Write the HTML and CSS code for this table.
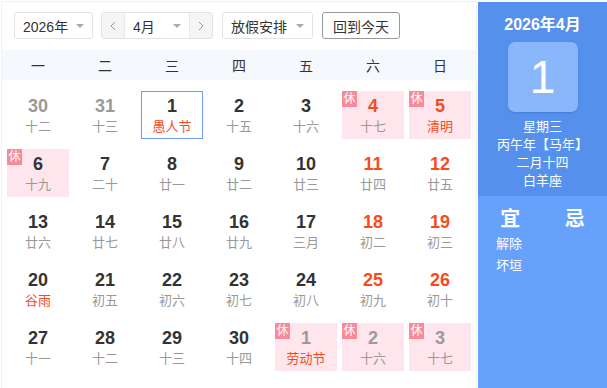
FILE: index.html
```html
<!DOCTYPE html>
<html lang="zh-CN">
<head>
<meta charset="utf-8">
<title>万年历</title>
<link rel="stylesheet" href="styles.css">
</head>
<body>
<div class="cal">
  <div class="main">
    <div class="toolbar">
      <div class="select sel-year"><span>2026年</span><i class="caret"></i></div>
      <div class="month-group">
        <div class="nav"><svg width="6" height="10" viewBox="0 0 6 10"><polyline points="5,1 1,5 5,9" fill="none" stroke="#999" stroke-width="1"/></svg></div>
        <div class="select sel-month"><span>4月</span><i class="caret"></i></div>
        <div class="nav"><svg width="6" height="10" viewBox="0 0 6 10"><polyline points="1,1 5,5 1,9" fill="none" stroke="#999" stroke-width="1"/></svg></div>
      </div>
      <div class="select sel-holiday"><span>放假安排</span><i class="caret"></i></div>
      <button class="today-btn">回到今天</button>
    </div>
    <div class="week">
      <span>一</span><span>二</span><span>三</span><span>四</span><span>五</span><span>六</span><span>日</span>
    </div>
    <div class="grid">
      <div class="cell other"><b>30</b><em>十二</em></div>
      <div class="cell other"><b>31</b><em>十三</em></div>
      <div class="cell today"><b>1</b><em class="fest">愚人节</em></div>
      <div class="cell"><b>2</b><em>十五</em></div>
      <div class="cell"><b>3</b><em>十六</em></div>
      <div class="cell rest wk"><i class="badge">休</i><b>4</b><em>十七</em></div>
      <div class="cell rest wk"><i class="badge">休</i><b>5</b><em class="fest">清明</em></div>

      <div class="cell rest"><i class="badge">休</i><b>6</b><em>十九</em></div>
      <div class="cell"><b>7</b><em>二十</em></div>
      <div class="cell"><b>8</b><em>廿一</em></div>
      <div class="cell"><b>9</b><em>廿二</em></div>
      <div class="cell"><b>10</b><em>廿三</em></div>
      <div class="cell wk"><b>11</b><em>廿四</em></div>
      <div class="cell wk"><b>12</b><em>廿五</em></div>

      <div class="cell"><b>13</b><em>廿六</em></div>
      <div class="cell"><b>14</b><em>廿七</em></div>
      <div class="cell"><b>15</b><em>廿八</em></div>
      <div class="cell"><b>16</b><em>廿九</em></div>
      <div class="cell"><b>17</b><em>三月</em></div>
      <div class="cell wk"><b>18</b><em>初二</em></div>
      <div class="cell wk"><b>19</b><em>初三</em></div>

      <div class="cell"><b>20</b><em class="fest">谷雨</em></div>
      <div class="cell"><b>21</b><em>初五</em></div>
      <div class="cell"><b>22</b><em>初六</em></div>
      <div class="cell"><b>23</b><em>初七</em></div>
      <div class="cell"><b>24</b><em>初八</em></div>
      <div class="cell wk"><b>25</b><em>初九</em></div>
      <div class="cell wk"><b>26</b><em>初十</em></div>

      <div class="cell"><b>27</b><em>十一</em></div>
      <div class="cell"><b>28</b><em>十二</em></div>
      <div class="cell"><b>29</b><em>十三</em></div>
      <div class="cell"><b>30</b><em>十四</em></div>
      <div class="cell other rest"><i class="badge">休</i><b>1</b><em class="fest">劳动节</em></div>
      <div class="cell other rest"><i class="badge">休</i><b>2</b><em>十六</em></div>
      <div class="cell other rest"><i class="badge">休</i><b>3</b><em>十七</em></div>
    </div>
  </div>
  <div class="side">
    <div class="side-top">
      <div class="side-title">2026年4月</div>
      <div class="day-box">1</div>
      <div class="info">
        <div>星期三</div>
        <div>丙午年【马年】</div>
        <div>二月十四</div>
        <div>白羊座</div>
      </div>
    </div>
    <div class="side-bottom">
      <div class="col">
        <div class="col-head">宜</div>
        <div class="item">解除</div>
        <div class="item">坏垣</div>
      </div>
      <div class="col">
        <div class="col-head">忌</div>
      </div>
    </div>
  </div>
</div>
</body>
</html>
```

FILE: styles.css
```css
* { box-sizing: border-box; }
html, body { margin: 0; padding: 0; background: #fff; }
body {
  font-family: "Liberation Sans", "Noto Sans CJK SC", sans-serif;
  color: #333;
  width: 607px;
  height: 388px;
  overflow: hidden;
}
.cal {
  display: flex;
  padding: 1px 0 0 1px;
  height: 388px;
}
.main {
  width: 476px;
  margin-right: 1px;
  border: 1px solid #f2f2f2;
  border-bottom: none;
}
.toolbar {
  display: flex;
  align-items: center;
  padding: 10px 0 0 12px;
  height: 37px;
}
.select {
  height: 27px;
  border: 1px solid #e3e3e3;
  border-radius: 3px;
  display: flex;
  align-items: center;
  justify-content: space-between;
  padding: 0 8px 0 8px;
  font-size: 14px;
  color: #333;
}
.caret {
  width: 0;
  height: 0;
  border-left: 4px solid transparent;
  border-right: 4px solid transparent;
  border-top: 4px solid #aaa;
}
.sel-year { width: 79px; }
.month-group {
  margin-left: 8px;
  display: flex;
  height: 27px;
  border: 1px solid #e3e3e3;
  border-radius: 3px;
  overflow: hidden;
}
.month-group .select {
  border: none;
  border-left: 1px solid #e8e8e8;
  border-right: 1px solid #e8e8e8;
  border-radius: 0;
  height: 25px;
  width: 66px;
}
.nav {
  width: 22px;
  background: #f5f5f5;
  display: flex;
  align-items: center;
  justify-content: center;
}
.sel-holiday { width: 91px; margin-left: 9px; }
.today-btn {
  margin-left: 9px;
  width: 78px;
  height: 27px;
  border: 1px solid #999;
  border-radius: 3px;
  background: #fff;
  font-family: inherit;
  font-size: 14px;
  color: #333;
  padding: 0;
}
.week {
  margin-top: 11px;
  height: 30px;
  background: #f5f8fd;
  display: grid;
  grid-template-columns: repeat(7, 62px);
  column-gap: 5px;
  padding: 0 5px;
  align-items: center;
  font-size: 14px;
  color: #333;
}
.week span { text-align: center; }
.grid {
  padding: 11px 5px 0;
  display: grid;
  grid-template-columns: repeat(7, 62px);
  grid-auto-rows: 48px;
  column-gap: 5px;
  row-gap: 10px;
}
.cell {
  position: relative;
  text-align: center;
  padding-top: 5px;
  border: 1px solid transparent;
}
.cell b {
  display: block;
  font-size: 18px;
  line-height: 20px;
  font-weight: bold;
  color: #333;
  margin-top: -1px;
}
.cell em {
  display: block;
  font-style: normal;
  font-size: 13px;
  line-height: 18px;
  margin-top: 2px;
  color: #999;
}
.cell.wk b { color: #f74b1e; }
.cell.other b { color: #9a9a9a; }
.cell em.fest { color: #f74b1e; }
.cell.rest { background: #ffe6ec; }
.cell.today { border-color: #6a9ff2; }
.badge {
  position: absolute;
  top: -1px;
  left: -1px;
  width: 15px;
  height: 16px;
  background: #f98a9b;
  color: #fff;
  font-style: normal;
  font-size: 12px;
  line-height: 16px;
  text-align: center;
}
.side {
  width: 129px;
  margin-top: 1px;
  display: flex;
  flex-direction: column;
  color: #fff;
}
.side-top {
  background: #5591ec;
  height: 194px;
  display: flex;
  flex-direction: column;
  align-items: center;
  padding-top: 13px;
}
.side-title {
  font-size: 16px;
  font-weight: bold;
  line-height: 20px;
}
.day-box {
  margin-top: 7px;
  width: 70px;
  height: 70px;
  border-radius: 7px;
  background: #8ab6fc;
  box-shadow: 0 1px 2px rgba(40, 90, 180, 0.35);
  font-size: 46px;
  line-height: 70px;
  text-align: center;
  font-family: "Liberation Sans", sans-serif;
}
.info {
  margin-top: 6px;
  text-align: center;
  font-size: 13px;
  line-height: 18px;
}
.side-bottom {
  flex: 1;
  background: #66a1fc;
  display: flex;
  padding-top: 11px;
}
.col { width: 50%; }
.col-head {
  text-align: center;
  font-size: 20px;
  font-weight: bold;
  line-height: 24px;
  margin-bottom: 2px;
}
.item {
  padding-left: 18px;
  font-size: 13px;
  line-height: 22px;
}
```
